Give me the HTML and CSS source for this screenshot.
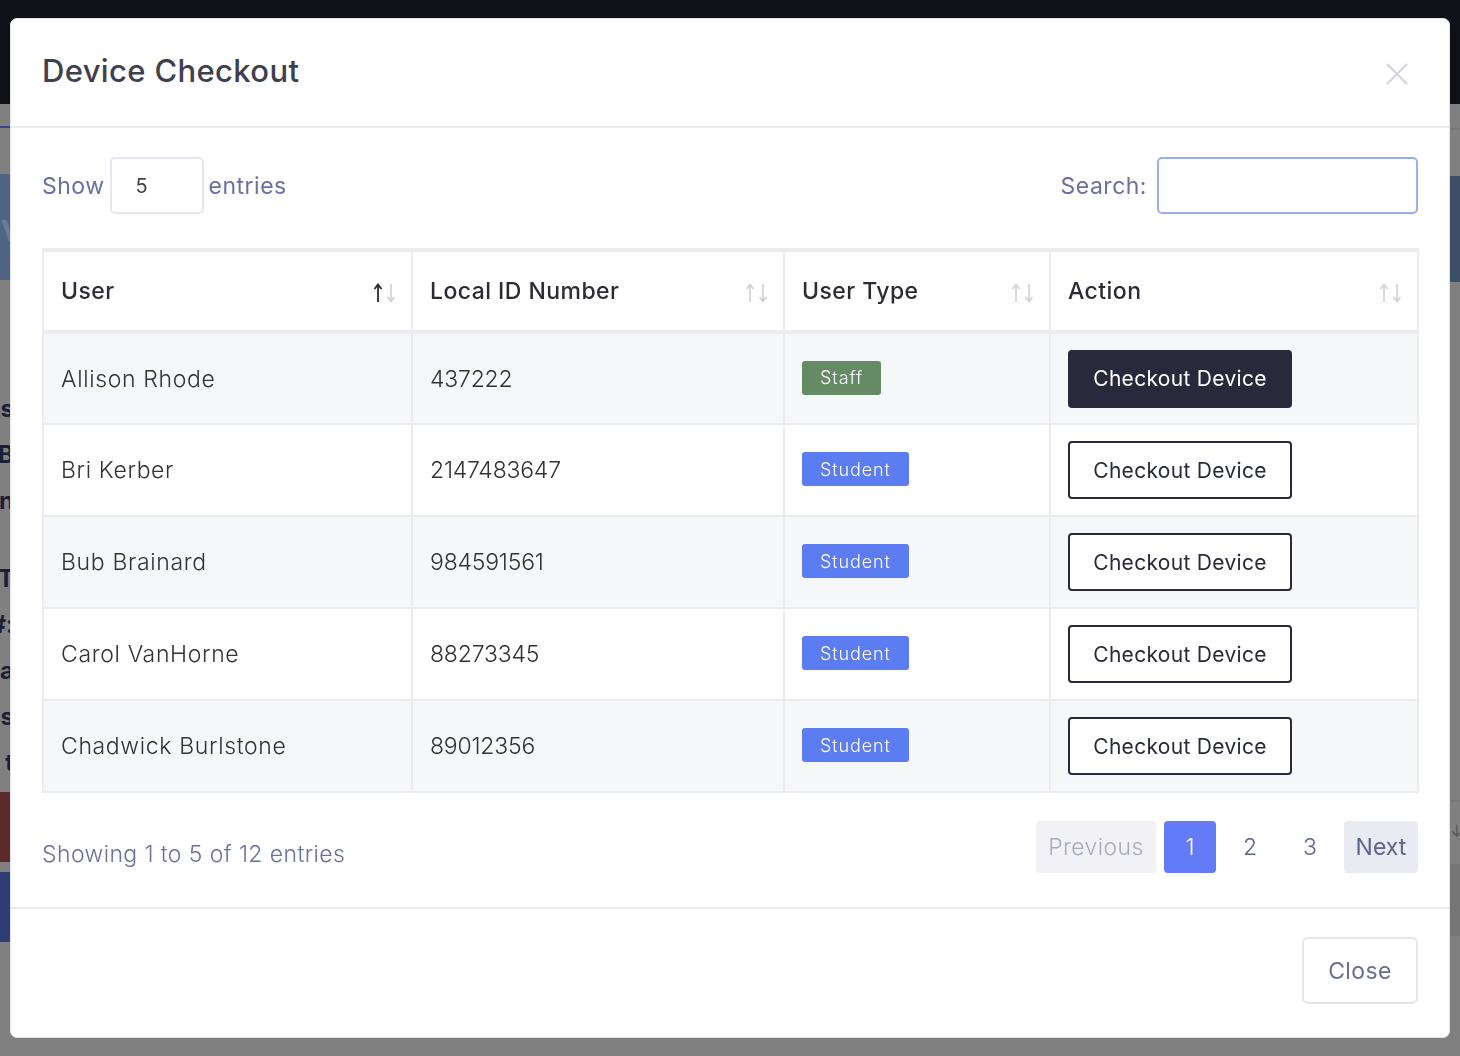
FILE: index.html
```html
<!DOCTYPE html>
<html lang="en">
<head>
<meta charset="utf-8">
<title>Device Checkout</title>
<link rel="stylesheet" href="styles.css">
</head>
<body>
<div class="page">
  <div class="navbar"></div>
  <div class="under">
    <div class="under-left">
      <div class="u-line"></div>
      <div class="u-blue"><span>ev</span></div>
      <div class="u-letters">
        <span>s</span><span>B</span><span>n</span><span class="gap">T</span><span>#:</span><span>a</span><span>s</span><span>t</span>
      </div>
      <div class="u-red"></div>
      <div class="u-navy"></div>
    </div>
    <div class="under-right">
      <div class="ur-line"></div>
      <div class="ur-blue"></div>
      <div class="ur-line2"></div>
      <div class="ur-arrow">↓</div>
      <div class="ur-dark"></div>
    </div>
  </div>
</div>
<div class="modal">
  <div class="modal-header">
    <h2 class="modal-title">Device Checkout</h2>
    <button class="close-x" aria-label="Close">
      <svg width="22" height="22" viewBox="0 0 22 22"><path d="M1 1 L21 21 M21 1 L1 21" stroke="#d6d6e0" stroke-width="2.4" fill="none"/></svg>
    </button>
  </div>
  <div class="modal-body">
    <div class="controls">
      <label class="length">Show <span class="select-box">5</span> entries</label>
      <label class="search">Search: <span class="search-box"></span></label>
    </div>
    <table class="data">
      <colgroup><col class="c1"><col class="c2"><col class="c3"><col class="c4"></colgroup>
      <thead>
        <tr>
          <th><div class="th-in"><span>User</span><span class="sort"><svg width="24" height="22" viewBox="0 0 24 22"><path d="M5 3 V20 M1.5 7 L5 2.5 L8.5 7" stroke="#2a2a35" stroke-width="1.8" fill="none"/><path d="M18 2 V19 M14.5 15 L18 19.5 L21.5 15" stroke="#cfcfd6" stroke-width="1.6" fill="none"/></svg></span></div></th>
          <th><div class="th-in"><span>Local ID Number</span><span class="sort"><svg width="24" height="22" viewBox="0 0 24 22"><path d="M5 3 V20 M1.5 7 L5 2.5 L8.5 7" stroke="#cfcfd6" stroke-width="1.6" fill="none"/><path d="M18 2 V19 M14.5 15 L18 19.5 L21.5 15" stroke="#cfcfd6" stroke-width="1.6" fill="none"/></svg></span></div></th>
          <th><div class="th-in"><span>User Type</span><span class="sort"><svg width="24" height="22" viewBox="0 0 24 22"><path d="M5 3 V20 M1.5 7 L5 2.5 L8.5 7" stroke="#cfcfd6" stroke-width="1.6" fill="none"/><path d="M18 2 V19 M14.5 15 L18 19.5 L21.5 15" stroke="#cfcfd6" stroke-width="1.6" fill="none"/></svg></span></div></th>
          <th><div class="th-in"><span>Action</span><span class="sort"><svg width="24" height="22" viewBox="0 0 24 22"><path d="M5 3 V20 M1.5 7 L5 2.5 L8.5 7" stroke="#cfcfd6" stroke-width="1.6" fill="none"/><path d="M18 2 V19 M14.5 15 L18 19.5 L21.5 15" stroke="#cfcfd6" stroke-width="1.6" fill="none"/></svg></span></div></th>
        </tr>
      </thead>
      <tbody>
        <tr class="odd"><td>Allison Rhode</td><td class="num-cell">437222</td><td><span class="badge staff">Staff</span></td><td><button class="btn btn-dark">Checkout Device</button></td></tr>
        <tr><td>Bri Kerber</td><td class="num-cell">2147483647</td><td><span class="badge student">Student</span></td><td><button class="btn btn-outline">Checkout Device</button></td></tr>
        <tr class="odd"><td>Bub Brainard</td><td class="num-cell">984591561</td><td><span class="badge student">Student</span></td><td><button class="btn btn-outline">Checkout Device</button></td></tr>
        <tr><td>Carol VanHorne</td><td class="num-cell">88273345</td><td><span class="badge student">Student</span></td><td><button class="btn btn-outline">Checkout Device</button></td></tr>
        <tr class="odd"><td>Chadwick Burlstone</td><td class="num-cell">89012356</td><td><span class="badge student">Student</span></td><td><button class="btn btn-outline">Checkout Device</button></td></tr>
      </tbody>
    </table>
    <div class="table-foot">
      <div class="info">Showing 1 to 5 of 12 entries</div>
      <div class="pager">
        <span class="pg prev">Previous</span>
        <span class="pg num active">1</span>
        <span class="pg num">2</span>
        <span class="pg num">3</span>
        <span class="pg next">Next</span>
      </div>
    </div>
  </div>
  <div class="modal-footer">
    <button class="btn-close">Close</button>
  </div>
</div>
</body>
</html>
```

FILE: styles.css
```css
* { box-sizing: border-box; }
html, body { margin: 0; padding: 0; }
body {
  width: 1460px;
  height: 1056px;
  overflow: hidden;
  font-family: "Inter", "Open Sans", sans-serif;
  background: #808080;
}

/* underlying page (seen through the backdrop) */
.page { width: 1460px; height: 1056px; display: flex; flex-direction: column; }
.navbar { height: 104px; background: #101116; flex: none; }
.under { flex: 1; display: flex; justify-content: space-between; }
.under-left { width: 10px; display: flex; flex-direction: column; overflow: hidden; }
.u-line { height: 2px; background: #3d418a; margin-top: 22px; }
.u-blue { height: 106px; background: #4f6482; margin-top: 46px; color: #6c7c95; font: 600 40px "Inter", sans-serif; display: flex; justify-content: flex-end; align-items: center; overflow: hidden; }
.u-blue span { margin-right: -14px; }
.u-letters { display: flex; flex-direction: column; align-items: flex-end; margin-top: 106px; color: #1b1e36; font: 700 24px/46px "Inter", sans-serif; }
.u-letters span { margin-right: -4px; height: 46px; }
.u-letters .gap { margin-top: 32px; }
.u-red { height: 70px; background: #5c2a2a; margin-top: 6px; }
.u-navy { height: 70px; background: #2e3e74; margin-top: 10px; }
.under-right { width: 10px; display: flex; flex-direction: column; }
.ur-line { height: 2px; background: #777; margin-top: 24px; }
.ur-blue { height: 106px; background: #3d4f66; margin-top: 46px; }
.ur-line2 { height: 2px; background: #777; margin-top: 518px; }
.ur-arrow { color: #555; font-size: 16px; line-height: 30px; height: 30px; margin-top: 14px; }
.ur-dark { height: 72px; background: #767676; margin-top: 18px; }

/* modal */
.modal {
  position: fixed;
  top: 18px;
  left: 10px;
  width: 1440px;
  height: 1020px;
  background: #fff;
  border: 1px solid #e3e3ea;
  border-radius: 7px;
  display: flex;
  flex-direction: column;
}
.modal-header {
  height: 109px;
  border-bottom: 2px solid #eaeaf0;
  display: flex;
  align-items: center;
  justify-content: space-between;
  padding: 0 41px 0 31px;
  flex: none;
}
.modal-title {
  margin: 0;
  font-size: 31px;
  font-weight: 500;
  color: #3f3f50;
  letter-spacing: 0.35px;
  margin-top: -4px;
}
.close-x {
  border: 0; background: none; padding: 0; width: 22px; height: 22px;
  display: flex; margin-top: 3px;
}

.modal-body { padding: 29px 31px 34px 31px; flex: none; }
.controls { display: flex; justify-content: space-between; align-items: center; height: 57px; }
.length, .search {
  display: flex; align-items: center; font-size: 23px; font-weight: 400; color: #6a70a0;
  letter-spacing: 0.5px;
}
.select-box {
  width: 94px; height: 57px; margin: 0 5px 0 5px;
  border: 2px solid #e6e6ee; border-radius: 5px;
  display: flex; align-items: center; padding-left: 24px;
  color: #444; font-size: 20px;
}
.search-box {
  width: 261px; height: 57px; margin-left: 10px;
  border: 2px solid #9eabf6; border-radius: 5px;
}

.data {
  margin-top: 34px;
  width: 1375px;
  border-collapse: collapse;
  table-layout: fixed;
  color: #333;
}
.c1 { width: 369px; }
.c2 { width: 372px; }
.c3 { width: 266px; }
.c4 { width: 368px; }
.data th, .data td { border: 2px solid #ebebf1; padding: 0 16px 0 17px; text-align: left; }
.data th {
  height: 82px;
  border-top-width: 4px;
  border-bottom-width: 4px;
  font-size: 23px;
  font-weight: 500;
  color: #2b2b36;
  letter-spacing: 0.45px;
}
.th-in { display: flex; justify-content: space-between; align-items: center; }
.sort { display: flex; margin-top: 3px; margin-right: -2px; letter-spacing: 0; }
.data td { height: 92px; font-size: 23px; font-weight: 300; color: #333; letter-spacing: 0.65px; }
.data td.num-cell { letter-spacing: -0.2px; }
.data tr.odd td { background: #f6f7f9; }

.badge {
  display: inline-flex; align-items: center; height: 34px; padding: 0 18px;
  border-radius: 3px; color: #fff; font-size: 18px; font-weight: 300;
  letter-spacing: 0.9px;
  position: relative; top: -1px;
}
.staff { background: #648b63; }
.student { background: #5c7cf1; }

.btn {
  width: 224px; height: 58px; border-radius: 4px;
  font-family: inherit; font-size: 21px; font-weight: 400; letter-spacing: 0.3px;
  cursor: pointer;
}
.btn-dark { background: #28293a; color: #fff; border: 2px solid #28293a; }
.btn-outline { background: #fff; color: #28293a; border: 2px solid #28293a; }

.table-foot { display: flex; justify-content: space-between; align-items: flex-start; margin-top: 28px; }
.info { font-size: 23px; font-weight: 300; color: #6a70a0; padding-top: 19px; letter-spacing: 0.4px; }
.pager { display: flex; gap: 8px; }
.pg {
  height: 52px; min-width: 52px; display: flex; align-items: center; justify-content: center;
  border-radius: 4px; font-size: 23px; font-weight: 300; color: #5d6490;
}
.prev { width: 120px; background: #f2f2f6; color: #a9abc1; letter-spacing: 0.4px; }
.active { background: #647bf7; color: #fff; }
.next { width: 74px; background: #eaeaf3; color: #5d6490; font-weight: 400; }

.modal-footer {
  flex: 1;
  border-top: 2px solid #eaeaf0;
  display: flex; justify-content: flex-end; align-items: flex-start;
  padding: 28px 31px 0 0;
}
.btn-close {
  width: 116px; height: 67px; background: #fff;
  border: 2px solid #e5e5ed; border-radius: 6px;
  font-family: inherit; font-size: 23px; font-weight: 400; color: #6a6f95; letter-spacing: 0.4px;
}
```
